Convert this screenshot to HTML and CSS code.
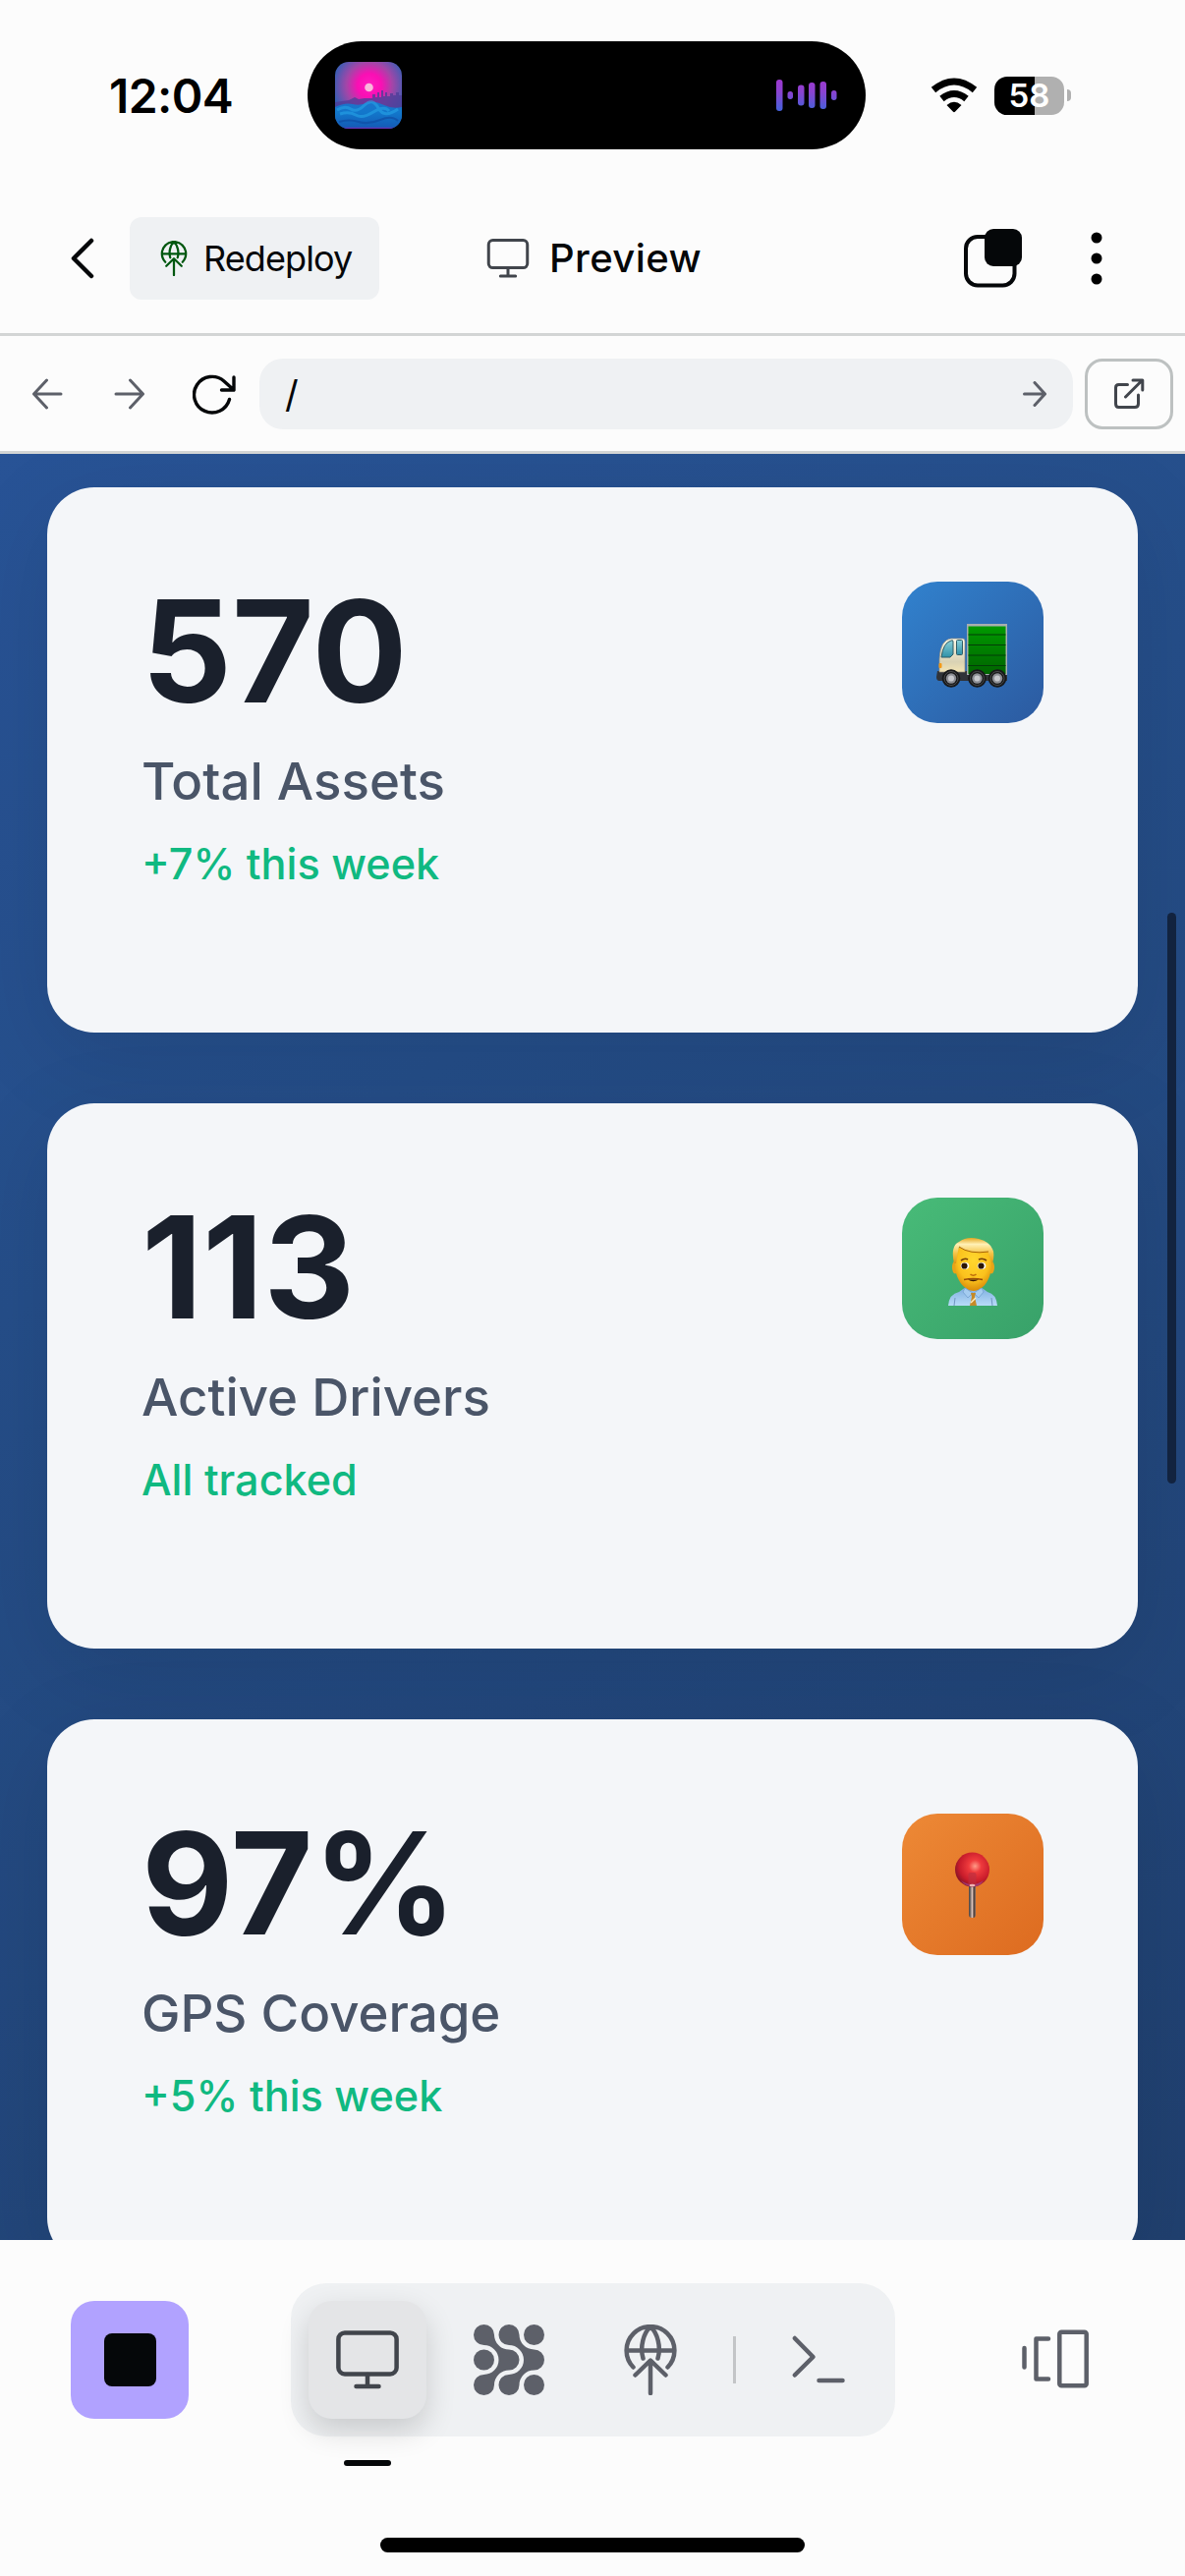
FILE: index.html
```html
<!DOCTYPE html>
<html lang="en">
<head>
<meta charset="utf-8">
<title>Preview</title>
<link rel="stylesheet" href="styles.css">
</head>
<body>
<svg class="sprite" aria-hidden="true">
  <defs>
    <symbol id="monitor" viewBox="0 0 72 72"><rect x="6.4" y="8.4" width="59.2" height="42" rx="6.5"/><path d="M36 51v12M24.5 63h23"/></symbol>
    <symbol id="publish" viewBox="0 0 72 72"><path d="M18.5 43.5A24.4 24.4 0 1 1 53.5 43.5M12 26.5h48M28.5 34.5C25 23 29 8 36 2.8C43 8 47 23 43.500 34.500M36 37v33M20.500 51.500 36 36.500 51.500 51.500"/></symbol>
  </defs>
</svg>
<div class="screen">
  <header class="status">
    <div class="clock">12:04</div>
    <div class="island">
      <svg class="album" viewBox="0 0 68 68">
        <defs>
          <radialGradient id="sun" cx="35" cy="24" r="40" gradientUnits="userSpaceOnUse"><stop offset="0" stop-color="#ff1cc0"/><stop offset=".3" stop-color="#fa0fb4"/><stop offset=".58" stop-color="#a545a8"/><stop offset="1" stop-color="#2463b6"/></radialGradient>
          <linearGradient id="sea" x1="0" y1="0" x2="0" y2="1"><stop offset="0" stop-color="#1c74cc"/><stop offset=".4" stop-color="#1277cb"/><stop offset="1" stop-color="#1459b5"/></linearGradient>
          <clipPath id="art"><rect width="68" height="68" rx="14"/></clipPath>
        </defs>
        <g clip-path="url(#art)">
          <rect width="68" height="68" fill="url(#sun)"/>
          <path d="M0 41 14 39 20 36 24 38 30 37 38 37V33H41V36H43V31H45V36H47V29H49V35H51V31H53V35H56V32H59V34H62V31H65V34H68V48H0Z" fill="#503d98" opacity=".8"/>
          <path d="M0 46Q10 41 18 43T34 41Q42 40 50 44T68 46V68H0Z" fill="url(#sea)"/>
          <path d="M2 49q8-5 14-1t14-4 14 3 20 1M5 53q9-3 16 1t18-3 16-1" fill="none" stroke="#25a0e3" stroke-width="3" opacity=".65"/>
          <path d="M4 61q10-3 20 0t22-2 18 1" fill="none" stroke="#0f4da4" stroke-width="2" opacity=".7"/>
          <path d="M0 67.500H68" stroke="#6732b6" stroke-width="1.500"/>
          <circle cx="34.500" cy="26" r="4.300" fill="#f9b7dc"/>
        </g>
      </svg>
      <svg class="wave" viewBox="0 0 62 34">
        <defs><linearGradient id="tone" x1="0" y1="0" x2="0" y2="34" gradientUnits="userSpaceOnUse"><stop offset="0" stop-color="#a038cf"/><stop offset=".4" stop-color="#8a43d0"/><stop offset="1" stop-color="#3f63db"/></linearGradient></defs>
        <g fill="url(#tone)"><rect y="1" width="6.500" height="32" rx="3"/><rect x="11.500" y="13" width="5.500" height="8" rx="2.700"/><rect x="22" y="6.500" width="6.500" height="21" rx="3"/><rect x="33" y="4" width="6.500" height="26" rx="3"/><rect x="44.500" y="3" width="6.500" height="28" rx="3"/><rect x="56" y="12" width="5.500" height="10" rx="2.700"/></g>
      </svg>
    </div>
    <svg class="wifi" viewBox="0 0 48 36"><g fill="none" stroke="#000" stroke-width="7"><path d="M3 12.500Q24-4.500 45 12.500" stroke-linejoin="round"/><path d="M11.500 21.500Q24 11.500 36.500 21.500"/></g><path d="M16.500 28Q24 21.500 31.500 28L25.200 34.500Q24 35.800 22.800 34.500Z"/></svg>
    <div class="battery"><span>58</span></div>
    <div class="nub"></div>
  </header>

  <nav class="titlebar">
    <svg class="back" viewBox="0 0 24 42"><path d="M21 3 3 21 21 39"/></svg>
    <div class="redeploy"><svg class="ico publish"><use href="#publish"/></svg><span>Redeploy</span></div>
    <div class="title"><svg class="ico monitor"><use href="#monitor"/></svg><span>Preview</span></div>
    <svg class="windows" viewBox="0 0 60 60"><rect x="2" y="8" width="49.500" height="49.500" rx="12" fill="none" stroke="#050709" stroke-width="4"/><rect x="21" y="0" width="38" height="38" rx="9" fill="#050709"/></svg>
    <svg class="more" viewBox="0 0 12 54"><circle cx="6" cy="6" r="5.500"/><circle cx="6" cy="27" r="5.500"/><circle cx="6" cy="48" r="5.500"/></svg>
  </nav>

  <nav class="address">
    <svg class="step" viewBox="0 0 32 32"><path d="M30 16H2.500M15.500 2 2.500 16 15.500 30"/></svg>
    <svg class="step next" viewBox="0 0 32 32"><path d="M2 16H29.500M16.500 2 29.500 16 16.500 30"/></svg>
    <svg class="reload" viewBox="0 0 46 42"><path d="M37.500 26.500A18.300 18.300 0 1 1 32 8L42 17M42 4V17H29.500"/></svg>
    <div class="url"><span>/</span><svg class="go" viewBox="0 0 24 26"><path d="M1.500 13H22.500M12 1.500 22.500 13 12 24.500"/></svg></div>
    <div class="open"><svg viewBox="0 0 32 32"><path d="M14.500 6.500H5.500Q2.500 6.500 2.500 9.500V26Q2.500 29.500 5.500 29.500H22Q25.500 29.500 25.500 26V17M12.500 19 29.500 2M20 2H29.800V12"/></svg></div>
  </nav>

  <main class="page">
    <section class="card">
      <div class="facts"><div class="value">570</div><div class="label">Total Assets</div><div class="trend">+7% this week</div></div>
      <div class="badge blue">
        <svg viewBox="0 0 144 144">
          <defs>
            <linearGradient id="box" x1="0" y1="0" x2="0" y2="1"><stop stop-color="#009900"/><stop offset="1" stop-color="#006400"/></linearGradient>
            <linearGradient id="cab" x1="0" y1="0" x2="0" y2="1"><stop stop-color="#fffbe9"/><stop offset=".7" stop-color="#d9d2b4"/><stop offset="1" stop-color="#f2e4b4"/></linearGradient>
            <linearGradient id="glass" x1="0" y1="0" x2="0" y2="1"><stop stop-color="#8bd1da"/><stop offset="1" stop-color="#2e91a8"/></linearGradient>
            <g id="wheel"><circle r="9.300" fill="#171819"/><circle r="7" fill="none" stroke="#4b4c4e"/><circle r="5.200" fill="#8c8e94"/><circle r="3" fill="#c7c8cc"/></g>
          </defs>
          <path d="M36 91H107V101H38Q35 101 35 97Z" fill="#303338"/>
          <path d="M38 92V79Q39 59 50 58H62Q64 58 64 61V92Z" fill="url(#cab)" stroke="#928e7e" stroke-width=".7"/>
          <path d="M40 77Q42 62 50 60Q52 59 52 61V74L49 77Z" fill="url(#glass)" stroke="#315d66"/>
          <rect x="55.500" y="59.500" width="6" height="15" rx="1" fill="url(#glass)" stroke="#315d66"/>
          <rect x="66" y="43" width="41" height="52" fill="#a9afb0"/>
          <rect x="67.500" y="45.500" width="38" height="48.500" fill="url(#box)"/>
          <path d="M67.500 54H105.500M67.500 64.500H105.500M67.500 75H105.500M67.500 85.500H105.500" stroke="#033d08" stroke-width="1.200"/>
          <rect x="37.500" y="83" width="3" height="5" rx="1" fill="#f39a18"/>
          <use href="#wheel" x="50" y="98.500"/><use href="#wheel" x="76.500" y="98.500"/><use href="#wheel" x="97" y="98.500"/>
        </svg>
      </div>
    </section>

    <section class="card">
      <div class="facts"><div class="value">113</div><div class="label">Active Drivers</div><div class="trend">All tracked</div></div>
      <div class="badge green">
        <svg viewBox="0 0 144 144">
          <defs>
            <radialGradient id="skin" cx=".5" cy=".35" r=".65"><stop stop-color="#ffd72e"/><stop offset=".65" stop-color="#fbc21d"/><stop offset="1" stop-color="#d98b09"/></radialGradient>
            <linearGradient id="hair" x1="0" y1="0" x2="0" y2="1"><stop stop-color="#e4a71f"/><stop offset=".25" stop-color="#fff0b5"/><stop offset=".6" stop-color="#f5c448"/><stop offset="1" stop-color="#dc9714"/></linearGradient>
            <linearGradient id="shirt" x1="0" y1="0" x2="0" y2="1"><stop stop-color="#7daee0"/><stop offset="1" stop-color="#b8dbf8"/></linearGradient>
          </defs>
          <path d="M47 110Q48 98 58 96L65 91H80L87 96Q96 98 97 110Z" fill="url(#shirt)"/>
          <path d="M53 110 54 102M91 102 92 110" stroke="#7196c0" fill="none"/>
          <ellipse cx="54" cy="71" rx="3" ry="6.500" fill="#e9a318"/><ellipse cx="91" cy="71" rx="3" ry="6.500" fill="#e9a318"/>
          <path d="M54 60Q54 47 73 47T91 60V71C90 84 82 95 73 95S55 84 54 71Z" fill="url(#skin)"/>
          <path d="M53 67Q49 49 58 45Q66 39 78 42Q97 47 92.500 65L91 67Q90 59 87 55Q70 58 58 50Q56 58 55 67Z" fill="url(#hair)"/>
          <path d="M58 50Q69 58 88 55" stroke="#a76408" fill="none"/>
          <path d="M60 64Q64 61 67 63M78 63Q82 61 86 64" stroke="#754109" stroke-width="1.600" fill="none"/>
          <ellipse cx="64" cy="69.500" rx="4.300" ry="3.400" fill="#fff"/><ellipse cx="81" cy="69.500" rx="4.300" ry="3.400" fill="#fff"/>
          <circle cx="63.500" cy="69.500" r="3.100" fill="#2b1703"/><circle cx="80.500" cy="69.500" r="3.100" fill="#2b1703"/>
          <path d="M69.500 78Q72.500 80.500 75.500 78" stroke="#bd6b0a" stroke-width="1.600" fill="none"/>
          <path d="M63 83.500Q72.500 81.500 82 83.500" stroke="#984d08" stroke-width="1.500" fill="none"/>
          <path d="M67 83.500Q72.500 87 78 83.500Z" fill="#3c1803"/>
          <path d="M64 92 72 97 67 102 62 96ZM81 92 73 97 78 102 83 96Z" fill="#a5ccf0" stroke="#6f9bcb" stroke-width=".7"/>
          <path d="M70 97H75L74 101 76 110H69L71 101Z" fill="#c58a27"/><path d="M70 107 75 102" stroke="#fff0c3" stroke-width="1.500"/>
        </svg>
      </div>
    </section>

    <section class="card">
      <div class="facts"><div class="value">97%</div><div class="label">GPS Coverage</div><div class="trend">+5% this week</div></div>
      <div class="badge orange">
        <svg viewBox="0 0 144 144">
          <defs>
            <radialGradient id="ball" cx=".58" cy=".4" r=".6"><stop stop-color="#ff9b87"/><stop offset=".3" stop-color="#ef3b3d"/><stop offset=".75" stop-color="#c91c2b"/><stop offset="1" stop-color="#8e1527"/></radialGradient>
            <linearGradient id="pin"><stop stop-color="#49403c"/><stop offset=".25" stop-color="#777170"/><stop offset=".5" stop-color="#dbc1b7"/><stop offset=".75" stop-color="#493b38"/><stop offset="1" stop-color="#8d7469"/></linearGradient>
          </defs>
          <rect x="68" y="70" width="7" height="36" rx="3" fill="url(#pin)"/>
          <circle cx="71.500" cy="57" r="17.500" fill="url(#ball)"/>
          <path d="M60 68Q71 76 83 68Q79 75 71.500 74.300Q64 74 60 68Z" fill="#a44890" opacity=".65"/>
          <rect x="67.500" y="60" width="8" height="13" rx="2" fill="#bd3041" opacity=".65"/><ellipse cx="71.500" cy="73" rx="3" ry="1.200" fill="#f0b4b4"/>
        </svg>
      </div>
    </section>
    <div class="scrollbar"></div>
  </main>

  <footer class="dock">
    <div class="stop"><i></i></div>
    <div class="tools">
      <div class="tool active"><svg class="ico"><use href="#monitor"/></svg><b></b></div>
      <div class="tool"><svg class="nodes" viewBox="0 0 72 72"><defs><path id="link" d="M21 10.500A15 15 0 0 0 36 25.500A10.500 10.500 0 0 1 36 46.500A15 15 0 0 0 21 61.500A10.500 10.500 0 1 1 10.500 51A15 15 0 0 0 10.500 21A10.500 10.500 0 1 1 21 10.500Z"/></defs><use href="#link"/><use href="#link" x="25.500"/><circle cx="10.500" cy="36" r="10.500"/><circle cx="61.500" cy="10.500" r="10.500"/><circle cx="61.500" cy="61.500" r="10.500"/></svg></div>
      <div class="tool"><svg class="ico"><use href="#publish"/></svg></div>
      <div class="divider"></div>
      <div class="tool"><svg class="ico" viewBox="0 0 72 72"><path d="M11.800 14 30.500 33 11.800 51.500M36.500 57H60.500"/></svg></div>
    </div>
    <svg class="ico panels" viewBox="0 0 72 72"><path d="M4.500 24V43.500M29 14.500H16.500V55.500H29"/><rect x="40.300" y="7.800" width="27.400" height="54.400" rx="2"/></svg>
    <div class="home"></div>
  </footer>
</div>
</body>
</html>
```

FILE: styles.css
```css
* { box-sizing: border-box; }
body { margin: 0; background: #fcfcfc; }
svg { display: block; flex: none; }
.sprite { position: absolute; width: 0; height: 0; }

.screen {
  width: 1206px;
  height: 2622px;
  display: flex;
  flex-direction: column;
  overflow: hidden;
  font-family: Inter, "Liberation Sans", sans-serif;
  background: #fcfcfc;
  color: #050709;
}

.ico {
  width: 72px;
  height: 72px;
  fill: none;
  stroke: #5d6069;
  stroke-width: 4.5;
  stroke-linecap: round;
  stroke-linejoin: round;
}

/* Status bar */
.status { height: 186px; flex: none; display: flex; align-items: center; padding: 8px 0 0 111px; }
.clock { width: 202px; font-size: 48px; font-weight: 600; letter-spacing: -0.6px; white-space: nowrap; color: #000; }
.island {
  width: 568px;
  height: 110px;
  border-radius: 55px;
  background: #000;
  display: flex;
  align-items: center;
  justify-content: space-between;
  padding: 0 29px 0 28px;
}
.album { width: 68px; height: 68px; }
.wave { width: 62px; height: 34px; }
.wifi { width: 48px; height: 36px; margin-left: 66px; }
.battery {
  width: 71px;
  height: 39px;
  margin-left: 17px;
  border-radius: 13px;
  background: linear-gradient(90deg, #000 41px, #b0b0b0 41px);
  display: flex;
  align-items: center;
  justify-content: center;
  color: #fff;
  font-size: 33px;
  font-weight: 600;
}
.nub { width: 4px; height: 12px; margin-left: 3px; border-radius: 0 4px 4px 0; background: #b0b0b0; }

/* Title bar */
.titlebar {
  height: 156px;
  flex: none;
  display: flex;
  align-items: center;
  padding-left: 72px;
  border-bottom: 3px solid #d3d5d5;
}
.back { width: 24px; height: 42px; fill: none; stroke: #050709; stroke-width: 4.5; stroke-linecap: round; stroke-linejoin: round; }
.redeploy {
  width: 254px;
  height: 84px;
  margin-left: 36px;
  padding-left: 27px;
  border-radius: 12px;
  background: #eff1f3;
  display: flex;
  align-items: center;
  font-size: 36px;
}
.redeploy span { margin-left: 12px; letter-spacing: -0.9px; }
.publish { width: 36px; height: 36px; stroke: #00570f; }
.title { width: 489px; margin-left: 107px; display: flex; align-items: center; font-size: 40px; font-weight: 500; }
.title span { margin-left: 18px; letter-spacing: 0.4px; }
.monitor { width: 48px; height: 48px; stroke: #41454c; }
.windows { width: 60px; height: 60px; margin-left: -1px; }
.more { width: 12px; height: 54px; margin-left: 69px; }

/* Address bar */
.address {
  height: 120px;
  flex: none;
  display: flex;
  align-items: center;
  padding-left: 32px;
  border-bottom: 3px solid #d3d5d5;
}
.address svg { fill: none; stroke: #5d6069; stroke-width: 3; stroke-linecap: round; stroke-linejoin: round; }
.step { width: 32px; height: 32px; }
.next { margin-left: 52px; }
.address .reload { width: 46px; height: 42px; margin-left: 48px; stroke: #050709; stroke-width: 3.4; }
.url {
  width: 828px;
  height: 72px;
  margin-left: 22px;
  padding: 0 27px 0 26px;
  border-radius: 24px;
  background: #eff1f3;
  display: flex;
  align-items: center;
  justify-content: space-between;
  font-size: 38px;
}
.go { width: 24px; height: 26px; }
.open {
  width: 90px;
  height: 72px;
  margin-left: 12px;
  border: 3px solid #bdc1c1;
  border-radius: 18px;
  display: flex;
  align-items: center;
  justify-content: center;
}
.address .open svg { width: 32px; height: 32px; stroke: #41454c; }

/* Previewed page */
.page {
  position: relative;
  height: 1818px;
  flex: none;
  padding: 34px 48px 0;
  display: flex;
  flex-direction: column;
  gap: 72px;
  overflow: hidden;
  background: linear-gradient(150deg, #285396 0%, #254e89 35%, #20406f 100%);
}
.card {
  height: 555px;
  flex: none;
  display: flex;
  justify-content: space-between;
  padding: 96px;
  border-radius: 48px;
  background: #f4f6f9;
  box-shadow: 0 24px 96px rgba(0, 0, 0, 0.1);
}
.value { margin-top: -1px; font-size: 144px; font-weight: 700; line-height: 144px; color: #1a202c; }
.label { margin-top: 26px; font-size: 52.8px; font-weight: 500; line-height: 69px; color: #4a5568; white-space: nowrap; }
.trend { margin-top: 21px; font-size: 43.2px; font-weight: 500; line-height: 56px; color: #10b981; white-space: nowrap; }
.badge { width: 144px; height: 144px; border-radius: 36px; overflow: hidden; }
.blue { background: linear-gradient(135deg, #3182ce, #2c5aa0); }
.green { background: linear-gradient(135deg, #48bb78, #38a169); }
.orange { background: linear-gradient(135deg, #ed8936, #dd6b20); }
.scrollbar { position: absolute; top: 467px; right: 9px; width: 9px; height: 581px; border-radius: 5px; background: #12233f; }

/* Bottom dock */
.dock {
  height: 342px;
  flex: none;
  display: grid;
  grid-template-columns: 224px 615px 1fr;
  grid-template-rows: 156px 1fr;
  align-items: center;
  padding: 44px 0 0 72px;
}
.stop { width: 120px; height: 120px; border-radius: 24px; background: #b1a2ff; display: flex; align-items: center; justify-content: center; }
.stop i { width: 53px; height: 54px; border-radius: 8px; background: #050709; }
.tools { height: 156px; padding: 0 18px; border-radius: 36px; background: #eff1f3; display: flex; align-items: center; gap: 24px; }
.tool { position: relative; width: 120px; height: 120px; flex: none; border-radius: 24px; display: flex; align-items: center; justify-content: center; }
.active { background: #e4e5e7; box-shadow: 0 12px 30px rgba(0, 0, 0, 0.16); }
.active .ico { stroke: #41454c; }
.active b { position: absolute; left: 36px; bottom: -48px; width: 48px; height: 6px; border-radius: 3px; background: #050709; }
.nodes { width: 72px; height: 72px; fill: #5d6069; }
.divider { width: 3px; height: 48px; background: #c3c5c7; }
.panels { margin-left: 127px; }
.home { grid-column: 1 / -1; align-self: start; width: 432px; height: 15px; margin: 103px 0 0 315px; border-radius: 8px; background: #000; }
```
